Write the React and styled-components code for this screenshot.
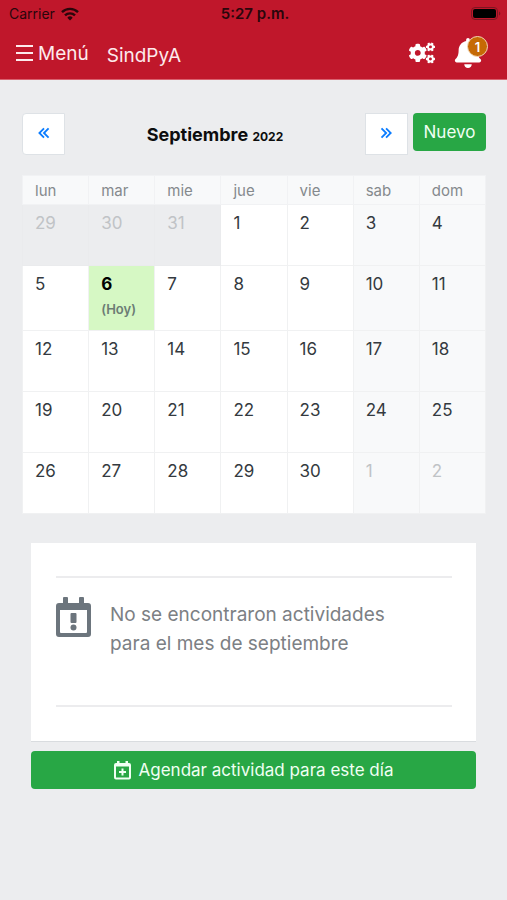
import React from 'react';
import styled, { createGlobalStyle, css } from 'styled-components';
import { BiChevronsLeft, BiChevronsRight } from 'react-icons/bi';
import { FaBell, FaCogs } from 'react-icons/fa';

const GlobalStyle = createGlobalStyle`
  * {
    box-sizing: border-box;
  }
  body {
    margin: 0;
    background: #ecedef;
    color: #343a40;
    font-family: Inter, "Liberation Sans", sans-serif;
    font-size: 17px;
  }
  button {
    font-family: inherit;
    cursor: pointer;
  }
`;

const Header = styled.header`
  background: #c0172b;
  border-bottom: 1px solid #d9616f;
`;

const StatusBar = styled.div`
  display: grid;
  grid-template-columns: 1fr auto 1fr;
  align-items: center;
  height: 27px;
  padding: 0 6px 0 9px;
  color: #2a060b;
  font-size: 14px;
`;

const Carrier = styled.span`
  display: flex;
  align-items: center;
  gap: 6px;
`;

const Clock = styled.span`
  font-size: 15px;
  font-weight: 600;
`;

const Battery = styled.svg`
  justify-self: end;
`;

const NavBar = styled.nav`
  display: flex;
  align-items: center;
  height: 52px;
  padding: 0 24px 0 15px;
  color: #fff;
`;

const MenuButton = styled.button`
  display: flex;
  align-items: center;
  gap: 4px;
  padding: 0;
  border: 0;
  background: none;
  color: #fdeaec;
  font-size: 19px;
`;

const Brand = styled.a`
  margin-left: 18px;
  padding-top: 4px;
  color: #fdeaec;
  font-size: 19px;
  text-decoration: none;
`;

const NavActions = styled.div`
  display: flex;
  align-items: center;
  gap: 18px;
  margin-left: auto;
`;

const IconButton = styled.button`
  position: relative;
  display: flex;
  padding: 0;
  border: 0;
  background: none;
  color: #fff;
`;

const Badge = styled.span`
  position: absolute;
  top: -2px;
  right: -5px;
  display: flex;
  align-items: center;
  justify-content: center;
  width: 21px;
  height: 21px;
  border: 1px solid #f3d9b8;
  border-radius: 50%;
  background: #c66a05;
  font-size: 13px;
  font-weight: 600;
`;

const Page = styled.main`
  padding: 33px 21px 0 22px;
`;

const Toolbar = styled.div`
  display: flex;
  align-items: flex-start;
  margin-bottom: 16px;
`;

const PageButton = styled.button`
  display: flex;
  align-items: center;
  justify-content: center;
  width: 43px;
  height: 42px;
  padding: 0 0 3px;
  border: 1px solid #dee2e6;
  border-radius: ${({ $side }) => ($side === 'left' ? '4px 0 0 4px' : '0')};
  background: #fff;
  color: #0a7cff;
`;

const Title = styled.h1`
  flex: 1;
  margin: 0;
  color: #0c0d0e;
  font-size: 18px;
  font-weight: 700;
  line-height: 44px;
  text-align: center;
`;

const Year = styled.small`
  font-size: 12px;
`;

const GreenButton = styled.button`
  display: flex;
  align-items: center;
  justify-content: center;
  gap: 8px;
  height: 38px;
  padding: 0 10px;
  border: 0;
  border-radius: 4px;
  background: #28a745;
  color: #f0fff3;
  font-size: 17px;
`;

const NewButton = styled(GreenButton)`
  width: 73px;
  margin-left: 5px;
`;

const Calendar = styled.table`
  width: 100%;
  border-collapse: collapse;
  table-layout: fixed;
`;

const DayName = styled.th`
  height: 29px;
  padding: 0 12px;
  border: 1px solid #f1f2f4;
  background: #f8f9fa;
  color: #85898d;
  font-size: 15px;
  font-weight: 400;
  text-align: left;
`;

const Day = styled.td`
  height: ${({ $tall }) => ($tall ? 65 : 61)}px;
  padding: 8px 12px;
  border: 1px solid #f0f1f2;
  background: ${({ $weekend }) => ($weekend ? '#f8f9fa' : '#fff')};
  line-height: 20px;
  vertical-align: top;

  ${({ $outside, $weekend }) => $outside && css`
    color: #c0c3c6;
    ${!$weekend && 'background: #ecedef; border-color: #eaebed;'}
  `}

  ${({ $today }) => $today && css`
    background: #d6f8c4;
    color: #000;
    font-weight: 700;
  `}
`;

const TodayLabel = styled.small`
  display: block;
  margin-top: 5px;
  color: #6c7d75;
  font-size: 13px;
  font-weight: 600;
`;

const Agenda = styled.section`
  margin: 29px 10px 0 9px;
`;

const Card = styled.div`
  margin-bottom: 9px;
  padding: 33px 24px 34px 25px;
  border-bottom: 1px solid #d9dcdf;
  background: #fff;
`;

const Empty = styled.div`
  display: flex;
  align-items: flex-start;
  gap: 19px;
  height: 131px;
  padding-top: 19px;
  border-top: 2px solid #ececee;
  border-bottom: 2px solid #ececee;
  color: #6c757d;

  svg {
    flex: none;
  }
`;

const Message = styled.p`
  max-width: 300px;
  margin: 3px 0 0;
  color: #7c8084;
  font-size: 19px;
  line-height: 29px;
`;

const ScheduleButton = styled(GreenButton)`
  width: 100%;
`;

const dayNames = ['lun', 'mar', 'mie', 'jue', 'vie', 'sab', 'dom'];

const weeks = [
  [29, 30, 31, 1, 2, 3, 4],
  [5, 6, 7, 8, 9, 10, 11],
  [12, 13, 14, 15, 16, 17, 18],
  [19, 20, 21, 22, 23, 24, 25],
  [26, 27, 28, 29, 30, 1, 2],
];

const TODAY = 6;

const isOutside = (week, day) => (week === 0 && day > 7) || (week === weeks.length - 1 && day < 7);

function WifiIcon() {
  return (
    <svg width="18" height="14" viewBox="0 0 18 14" fill="none" stroke="currentColor" strokeWidth="2.4" aria-hidden="true">
      <path d="M1 5.2a11.3 11.3 0 0 1 16 0" />
      <path d="M4 8.4a7.1 7.1 0 0 1 10 0" />
      <path d="M9 13.4 6.3 10.7a3.8 3.8 0 0 1 5.4 0z" fill="currentColor" stroke="none" />
    </svg>
  );
}

function BatteryIcon() {
  return (
    <Battery width="30" height="13" viewBox="0 0 30 13" aria-hidden="true">
      <rect x="0.5" y="0.5" width="26" height="12" rx="3.5" fill="none" stroke="#7d1622" />
      <rect x="2" y="2" width="23" height="9" rx="2" fill="#000" />
      <path d="M28 4.5v4c1.8-.6 1.8-3.4 0-4z" fill="#7d1622" />
    </Battery>
  );
}

function MenuIcon() {
  return (
    <svg width="19" height="18" viewBox="0 0 19 18" stroke="currentColor" strokeWidth="2" aria-hidden="true">
      <path d="M1 2h17M1 9h17M1 16h17" />
    </svg>
  );
}

function CalendarAlertIcon() {
  return (
    <svg width="35" height="40" viewBox="0 0 35 40" fill="currentColor" aria-hidden="true">
      <path
        fillRule="evenodd"
        d="M7 1a1 1 0 0 1 1-1h3a1 1 0 0 1 1 1v5h11V1a1 1 0 0 1 1-1h3a1 1 0 0 1 1 1v5h4a3 3 0 0 1 3 3v28a3 3 0 0 1-3 3H3a3 3 0 0 1-3-3V9a3 3 0 0 1 3-3h4zM4 13v22a1 1 0 0 0 1 1h25a1 1 0 0 0 1-1V13z"
      />
      <rect x="14.5" y="16" width="6" height="10" rx="1" />
      <circle cx="17.5" cy="30.5" r="3" />
    </svg>
  );
}

function CalendarPlusIcon() {
  return (
    <svg width="17" height="19" viewBox="0 0 17 19" fill="currentColor" aria-hidden="true">
      <path
        fillRule="evenodd"
        d="M3 0h2.5v2h6V0H14v2h1a2 2 0 0 1 2 2v12.5a2 2 0 0 1-2 2H2a2 2 0 0 1-2-2V4a2 2 0 0 1 2-2h1zM2 5.5v11h13v-11z"
      />
      <path d="M7.5 7.5h2V10H12v2H9.5v2.500h-2V12H5v-2h2.500z" />
    </svg>
  );
}

function Month() {
  return (
    <Calendar>
      <thead>
        <tr>
          {dayNames.map((name) => <DayName key={name} scope="col">{name}</DayName>)}
        </tr>
      </thead>
      <tbody>
        {weeks.map((days, week) => (
          <tr key={week}>
            {days.map((day, i) => {
              const today = day === TODAY;
              return (
                <Day
                  key={day}
                  $weekend={i > 4}
                  $outside={isOutside(week, day)}
                  $today={today}
                  $tall={week === 1}
                >
                  {day}
                  {today && <TodayLabel>(Hoy)</TodayLabel>}
                </Day>
              );
            })}
          </tr>
        ))}
      </tbody>
    </Calendar>
  );
}

export default function App() {
  return (
    <>
      <GlobalStyle />
      <Header>
        <StatusBar>
          <Carrier>Carrier <WifiIcon /></Carrier>
          <Clock>5:27 p.m.</Clock>
          <BatteryIcon />
        </StatusBar>
        <NavBar>
          <MenuButton type="button"><MenuIcon />Menú</MenuButton>
          <Brand href="#">SindPyA</Brand>
          <NavActions>
            <IconButton type="button" aria-label="Ajustes"><FaCogs size={26} /></IconButton>
            <IconButton type="button" aria-label="Notificaciones">
              <FaBell size={30} />
              <Badge>1</Badge>
            </IconButton>
          </NavActions>
        </NavBar>
      </Header>
      <Page>
        <Toolbar>
          <PageButton type="button" $side="left" aria-label="Mes anterior"><BiChevronsLeft size={22} /></PageButton>
          <Title>Septiembre <Year>2022</Year></Title>
          <PageButton type="button" aria-label="Mes siguiente"><BiChevronsRight size={22} /></PageButton>
          <NewButton type="button">Nuevo</NewButton>
        </Toolbar>
        <Month />
        <Agenda>
          <Card>
            <Empty>
              <CalendarAlertIcon />
              <Message>No se encontraron actividades para el mes de septiembre</Message>
            </Empty>
          </Card>
          <ScheduleButton type="button"><CalendarPlusIcon />Agendar actividad para este día</ScheduleButton>
        </Agenda>
      </Page>
    </>
  );
}
